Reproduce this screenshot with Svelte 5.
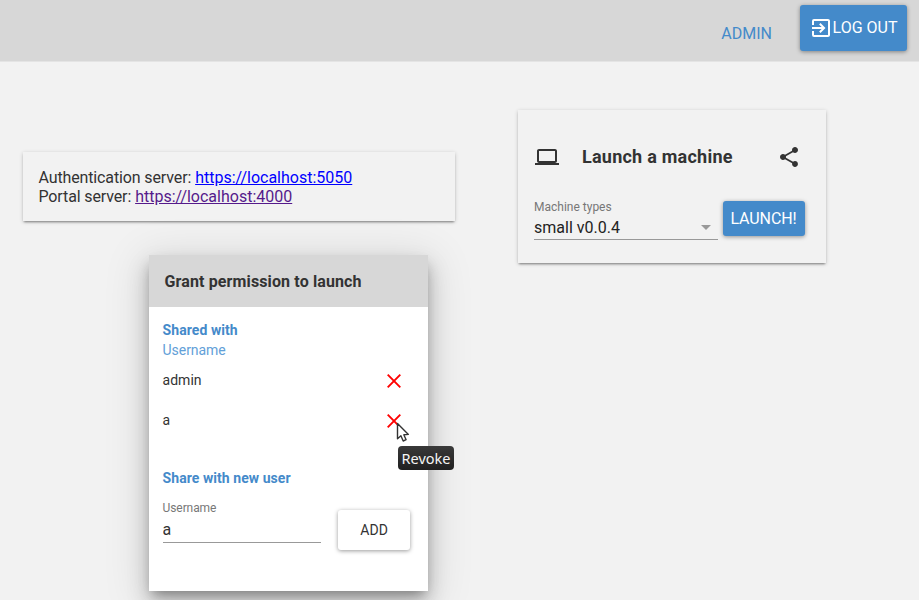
<script>
  const servers = [
    { label: 'Authentication server:', url: 'https://localhost:5050', visited: false },
    { label: 'Portal server:', url: 'https://localhost:4000', visited: true },
  ];
  const users = ['admin', 'a'];
  let newUser = $state('a');
</script>

<div class="page">
  <header>
    <a class="admin" href="#admin">ADMIN</a>
    <button class="primary logout">
      <svg width="24" height="24" viewBox="0 0 24 24" fill="currentColor"><path d="M10.09 15.59 11.5 17l5-5-5-5-1.41 1.41L12.67 11H3v2h9.67l-2.58 2.59zM19 3H5a2 2 0 0 0-2 2v4h2V5h14v14H5v-4H3v4a2 2 0 0 0 2 2h14c1.1 0 2-.9 2-2V5c0-1.1-.9-2-2-2z" /></svg>
      <span>LOG OUT</span>
    </button>
  </header>

  <main>
    <section class="card servers">
      {#each servers as server}
        <div><span>{server.label}</span> <a class:visited={server.visited} href={server.url}>{server.url}</a></div>
      {/each}
    </section>

    <section class="card machine">
      <div class="title">
        <svg class="laptop" width="24" height="24" viewBox="0 0 24 24" fill="currentColor"><path d="M20 18c1.1 0 1.99-.9 1.99-2L22 6c0-1.1-.9-2-2-2H4c-1.1 0-2 .9-2 2v10c0 1.1.9 2 2 2H0v2h24v-2h-4zM4 6h16v10H4V6z" /></svg>
        <h2>Launch a machine</h2>
        <svg class="share" width="24" height="24" viewBox="0 0 24 24" fill="currentColor"><path d="M18 16.08c-.76 0-1.44.3-1.96.77L8.91 12.7c.05-.23.09-.46.09-.7s-.04-.47-.09-.7l7.05-4.11c.54.5 1.25.81 2.04.81 1.66 0 3-1.34 3-3s-1.34-3-3-3-3 1.34-3 3c0 .24.04.47.09.7L8.04 9.81C7.5 9.31 6.79 9 6 9c-1.66 0-3 1.34-3 3s1.34 3 3 3c.79 0 1.5-.31 2.04-.81l7.12 4.16c-.05.21-.08.43-.08.65 0 1.61 1.31 2.92 2.92 2.92s2.92-1.31 2.92-2.92-1.31-2.92-2.92-2.92z" /></svg>
      </div>
      <div class="launch-row">
        <div class="select">
          <span class="label">Machine types</span>
          <div class="value"><span>small v0.0.4</span><i></i></div>
        </div>
        <button class="primary launch"><span>LAUNCH!</span></button>
      </div>
    </section>
  </main>

  <div class="dialog" role="dialog" aria-label="Grant permission to launch">
    <div class="dialog-head"><h3>Grant permission to launch</h3></div>
    <div class="dialog-body">
      <h4>Shared with</h4>
      <div class="column">Username</div>
      {#each users as user}
        <div class="user">
          <span>{user}</span>
          <button class="revoke" aria-label="Revoke">
            <svg width="14" height="14" viewBox="0 0 14 14" fill="none" stroke="#f00" stroke-width="1.9"><path d="M.7.7l12.6 12.6M13.3.7.7 13.3" /></svg>
          </button>
        </div>
      {/each}
      <h4 class="new">Share with new user</h4>
      <div class="share-row">
        <label>
          <span class="label">Username</span>
          <input bind:value={newUser} />
        </label>
        <button class="add">ADD</button>
      </div>
    </div>
  </div>

  <svg class="cursor" width="15" height="21" viewBox="0 0 15 21"><path d="M1.5 1.5v15.3l3.4-3 2.3 5.2 2.9-1.3-2.3-4.9 4.6-.4z" fill="#fff" stroke="#333" stroke-width="1.4" stroke-linejoin="round" /></svg>
  <div class="tooltip">Revoke</div>
</div>

<style>
  :global(body) { margin: 0; background: #f2f2f2; }
  .page {
    position: relative;
    height: 600px;
    overflow: hidden;
    background: #f2f2f2;
    color: #333;
    font: 16px/19px Roboto, sans-serif;
  }
  * { box-sizing: border-box; }
  h2, h3, h4 { margin: 0; font-weight: 700; white-space: nowrap; }
  svg { display: block; flex: none; }
  button { border: 0; padding: 0; font: inherit; white-space: nowrap; }
  header {
    display: flex;
    justify-content: flex-end;
    align-items: flex-start;
    height: 62px;
    padding: 5px 12px 0 0;
    background: #d7d7d7;
    border-bottom: 1px solid #e4e4e4;
  }
  .admin { margin: 19px 28px 0 0; color: #448aca; text-decoration: none; }
  .primary {
    display: flex;
    align-items: center;
    justify-content: center;
    background: #448aca;
    color: #fff;
    border-radius: 3px;
    box-shadow: 0 1px 4px rgba(0, 0, 0, .4);
  }
  .logout { width: 107px; height: 46px; padding-right: 1px; }
  .logout span { margin-top: -1px; }
  main { display: flex; align-items: flex-start; padding: 48px 0 0 22.5px; }
  .card { background: #f2f2f2; box-shadow: 0 2px 2px -1px rgba(0, 0, 0, .38), 0 1px 4px rgba(0, 0, 0, .2); }
  .servers { width: 432px; height: 69px; margin-top: 42px; padding: 15.5px 16px; white-space: nowrap; }
  .servers span { letter-spacing: -.13px; }
  .servers a { color: #00f; }
  .servers a.visited { color: #551a8b; }
  .machine { width: 308px; height: 153px; margin-left: 63.5px; padding: 35px 16px 0; }
  .title { display: flex; align-items: center; height: 24px; }
  .laptop { margin-left: .5px; }
  .title h2 { margin-left: 23.5px; font-size: 18px; line-height: 24px; letter-spacing: .24px; }
  .share { margin-left: auto; margin-right: 9px; }
  .launch-row { display: flex; margin-top: 22px; }
  .select { width: 183.5px; margin-top: 8.5px; }
  .label { display: block; font-size: 12px; line-height: 14px; color: #777; }
  .value {
    display: flex;
    align-items: center;
    height: 26px;
    padding-top: 3px;
    border-bottom: 1px solid #999;
    color: #222;
  }
  .value i {
    margin: 0 7px 0 auto;
    border: 5px solid transparent;
    border-top-color: #999;
    border-bottom: 0;
  }
  .launch { width: 82px; height: 35px; margin: 10px 0 0 5px; }
  .launch span { margin-top: -1px; letter-spacing: -.1px; }
  .dialog {
    position: absolute;
    left: 148.6px;
    top: 255px;
    width: 279.8px;
    height: 336px;
    background: #fff;
    box-shadow: 0 7px 12px -4px rgba(0, 0, 0, .36), 0 12px 20px 2px rgba(0, 0, 0, .15), 0 7px 40px 6px rgba(0, 0, 0, .11);
  }
  .dialog-head { height: 52px; padding: 17px 16px; background: #d7d7d7; }
  h3 { font-size: 16px; line-height: 20px; letter-spacing: .12px; }
  .dialog-body { padding: 13px 14px 0; font-size: 14px; line-height: 20px; }
  h4 { color: #448aca; font-size: 14px; line-height: 20px; letter-spacing: .06px; }
  .column { color: #62a0d8; letter-spacing: -.06px; }
  .user { display: flex; justify-content: space-between; align-items: center; height: 40px; padding-right: 13.5px; }
  .revoke { background: none; margin-top: 2px; }
  .new { margin-top: 28px; }
  .share-row { display: flex; margin-top: 13px; }
  label { width: 158px; }
  label .label { letter-spacing: -.1px; }
  input {
    display: block;
    width: 100%;
    height: 28px;
    padding: 1px 0 0;
    border: 0;
    border-bottom: 1px solid #999;
    outline: 0;
    background: none;
    font: 16px Roboto, sans-serif;
    color: #333;
  }
  .add {
    width: 72px;
    height: 40px;
    margin: 8.5px 0 0 17.5px;
    background: #fff;
    color: #333;
    border-radius: 3px;
    box-shadow: 0 1px 4px rgba(0, 0, 0, .4);
  }
  .cursor { position: absolute; left: 396px; top: 422px; }
  .tooltip {
    position: absolute;
    left: 398px;
    top: 446px;
    width: 56px;
    height: 24px;
    border-radius: 4px;
    background: linear-gradient(#393939, #202020);
    color: #f5f5f5;
    font: 14.5px/24px "Noto Sans", sans-serif;
    text-align: center;
  }
</style>
